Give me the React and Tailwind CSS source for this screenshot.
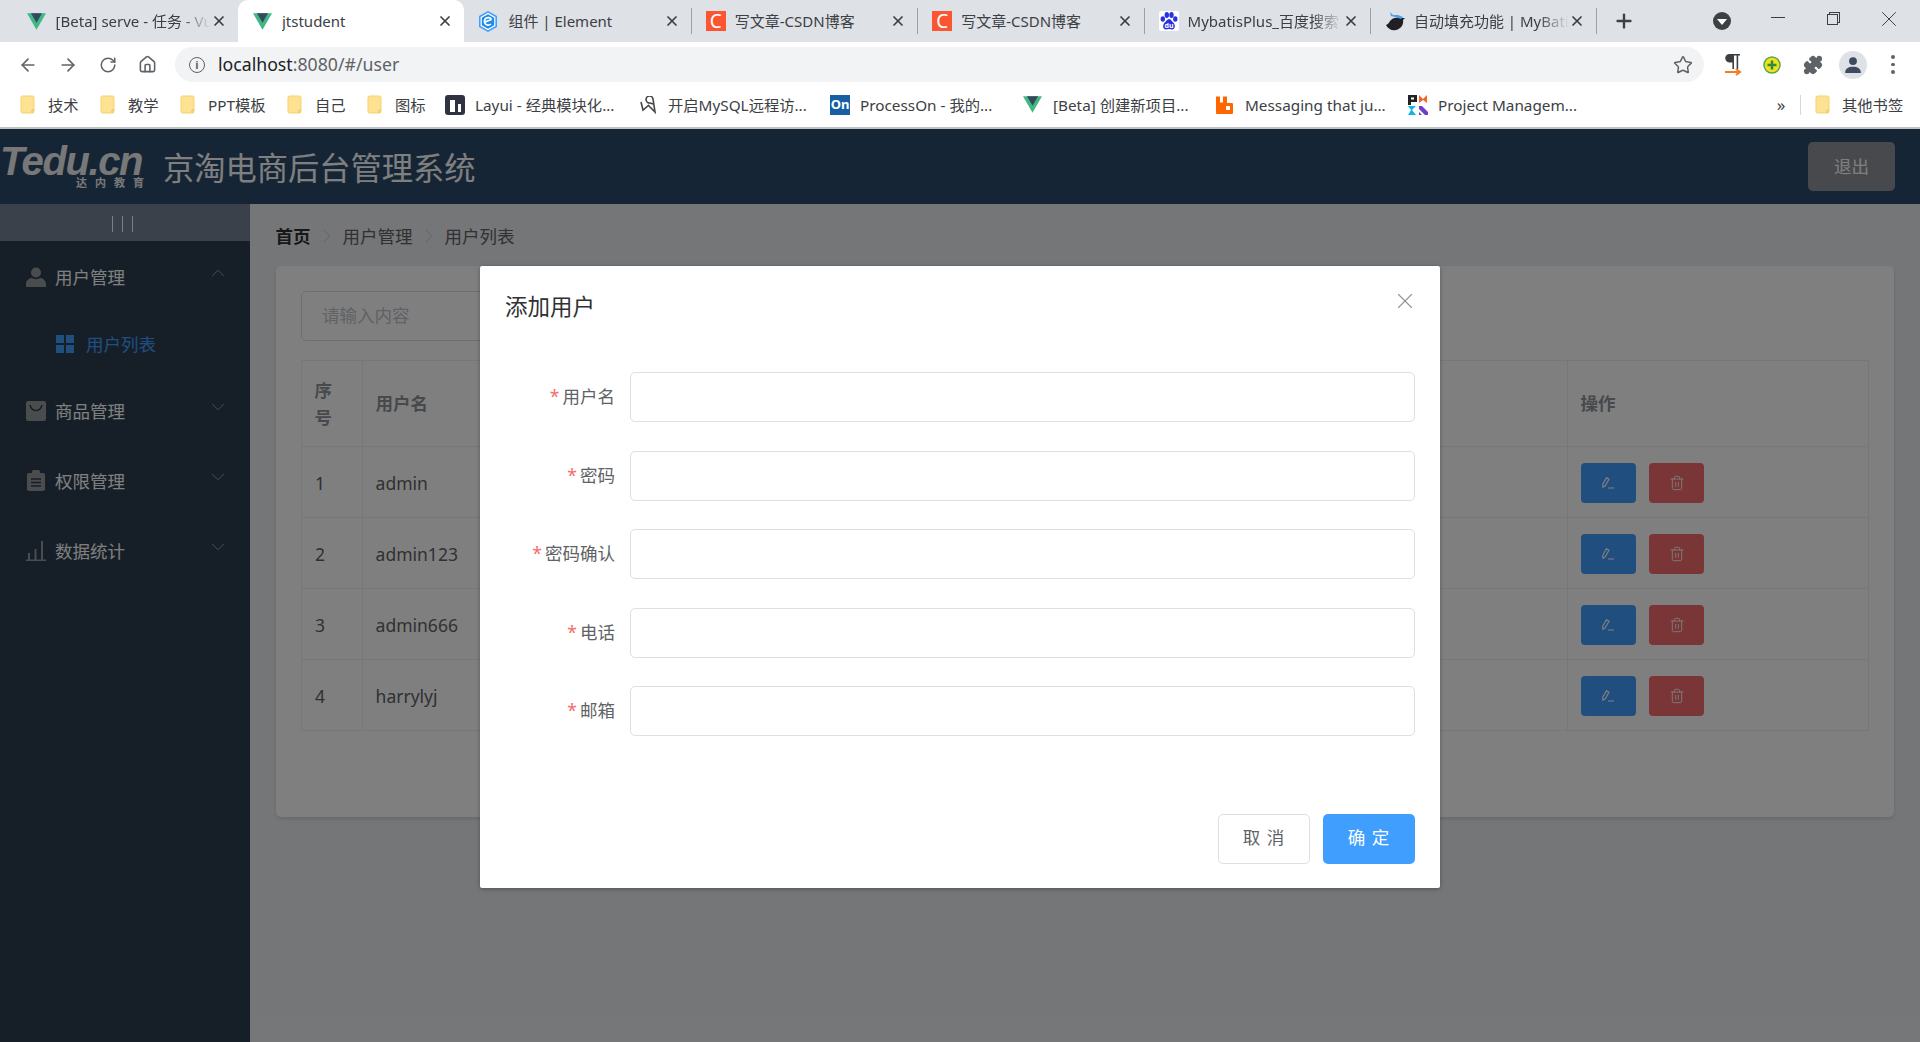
import * as React from "react";
import { ArrowLeft, ArrowRight, RotateCw, Home, Star, Puzzle, X, Plus, ChevronUp, ChevronDown, ChevronRight, Trash2 } from "lucide-react";

const font = "[font-family:'Noto_Sans','Noto_Sans_CJK_SC',sans-serif]";

function VueIcon() {
  return (
    <svg width="19" height="17" viewBox="0 0 24 21" className="shrink-0">
      <path d="M0 0h24L12 21z" fill="#41b883" />
      <path d="M5 0h14L12 12z" fill="#35495e" />
    </svg>
  );
}

function ElementIcon() {
  return (
    <svg width="18" height="21" viewBox="0 0 18 21" className="shrink-0">
      <path d="M9 0l9 5v11l-9 5-9-5V5z" fill="#409eff" />
      <path d="M9 1.800l7.400 4.100v9.200L9 19.200l-7.400-4.100V5.900z" fill="#fff" />
      <path d="M9 3.200l6.200 3.500v7.600L9 17.800l-6.200-3.500V6.700z" fill="#1f8ceb" />
      <path d="M12.500 8.500a3.800 3.800 0 1 0-.6 4.500M6 11l6.500-2.500" fill="none" stroke="#fff" strokeWidth="1.700" />
    </svg>
  );
}

function CsdnIcon() {
  return (
    <div className="flex h-5 w-5 shrink-0 items-center justify-center bg-[#fc5531] text-[19px] leading-none text-white">C</div>
  );
}

function BaiduIcon() {
  return (
    <svg width="20" height="20" viewBox="0 0 20 20" className="shrink-0">
      <rect width="20" height="20" rx="2" fill="#fff" />
      <g fill="#2932e1">
        <ellipse cx="3.800" cy="8" rx="2.200" ry="2.800" />
        <ellipse cx="7.800" cy="4" rx="2.200" ry="3" />
        <ellipse cx="12.500" cy="4" rx="2.200" ry="3" />
        <ellipse cx="16.300" cy="8" rx="2.200" ry="2.800" />
        <path d="M10 8c-2 0-3 2.500-4.500 3.800C3.300 14 3.800 18.500 7 18.500c1.200 0 2-.4 3-.4s2 .4 3 .4c3.200 0 3.700-4.500 1.500-6.700C13 10.500 12 8 10 8z" />
      </g>
      <text x="10" y="16.500" textAnchor="middle" fontSize="7" fontWeight="700" fill="#fff">du</text>
    </svg>
  );
}

function BirdIcon() {
  return (
    <svg width="21" height="21" viewBox="0 0 21 21" className="shrink-0">
      <path d="M1 14c2-1 3-2 4-4 2-3 6-4 9-3l6 0-2 2c1 4-2 9-7 10-4 1-8-1-10-5z" fill="#1f1f24" />
      <path d="M5 1l3 3 5 0 5 2-2 2-6-2-4-1z" fill="#4a9fe8" />
    </svg>
  );
}

function Tab({ icon, title, active, fade, sep }) {
  return (
    <div className={active ? "flex h-[42px] w-[226.400px] shrink-0 items-center rounded-t-[10px] bg-white pl-[15px] pr-[11px]" : "flex h-[42px] w-[226.400px] shrink-0 items-center pl-[15px] pr-[11px]"}>
      <div className="flex w-[19px] shrink-0 items-center">{icon}</div>
      <div className={fade
        ? "ml-[10px] min-w-0 flex-1 overflow-hidden whitespace-nowrap text-[15px] leading-5 text-[#3c4043] [mask-image:linear-gradient(to_right,black_80%,transparent)]"
        : "ml-[10px] min-w-0 flex-1 overflow-hidden whitespace-nowrap text-[15px] leading-5 text-[#3c4043]"}>
        {title}
      </div>
      <X size={16} strokeWidth={2.600} className="shrink-0 text-[#3c4043]" />
      {sep && <div className="ml-[11px] mr-[-12px] h-[26px] w-px shrink-0 bg-[#9aa0a6]" />}
    </div>
  );
}

function Folder() {
  return (
    <svg width="15" height="19" viewBox="0 0 15 19" className="shrink-0">
      <path d="M1 2.500A1.500 1.500 0 0 1 2.500 1h10A1.500 1.500 0 0 1 14 2.500v14a1.500 1.500 0 0 1-1.500 1.500h-10A1.500 1.500 0 0 1 1 16.500z" fill="#fde293" stroke="#f5d36b" />
      <path d="M12 18v-3h2" fill="none" stroke="#eec14e" />
    </svg>
  );
}

function Bookmark({ icon, label, className }) {
  return (
    <div className={`flex shrink-0 items-center ${className}`}>
      {icon}
      <span className="whitespace-nowrap text-[15.300px] leading-5 text-[#3c4043]">{label}</span>
    </div>
  );
}

function BrowserChrome() {
  return (
    <div className="shrink-0">
      <div className="flex h-[42px] items-center bg-[#dee1e6] pl-[11.600px]">
        <Tab icon={<VueIcon />} title="[Beta] serve - 任务 - Vue CLI" fade />
        <Tab active icon={<VueIcon />} title="jtstudent" />
        <Tab icon={<ElementIcon />} title="组件 | Element" sep />
        <Tab icon={<CsdnIcon />} title="写文章-CSDN博客" sep />
        <Tab icon={<CsdnIcon />} title="写文章-CSDN博客" sep />
        <Tab icon={<BaiduIcon />} title="MybatisPlus_百度搜索" fade sep />
        <Tab icon={<BirdIcon />} title="自动填充功能 | MyBatis-Plus" fade sep />
        <Plus size={22} strokeWidth={2.600} className="ml-[16.600px] text-[#3c4043]" />
        <div className="ml-[78px] flex h-[18px] w-[18px] items-center justify-center rounded-full bg-[#3c4043]">
          <div className="mt-[2px] h-0 w-0 border-x-[5px] border-t-[6px] border-x-transparent border-t-white" />
        </div>
        <div className="mb-[8px] ml-[40px] h-px w-[14px] bg-[#3c4043]" />
        <div className="mb-[2px] ml-[42px] mt-[-2px] h-[11px] w-[11px] border border-[#3c4043] shadow-[2px_-2px_0_-1px_#dee1e6,2px_-2px_0_0_#3c4043]" />
        <X size={26} strokeWidth={0.900} className="mb-[5px] ml-[38px] text-[#3c4043]" />
      </div>
      <div className="flex h-[40px] items-center bg-white pl-[18px] pt-[5px]">
        <ArrowLeft size={20} strokeWidth={2} className="text-[#5f6368]" />
        <ArrowRight size={20} strokeWidth={2} className="ml-[20px] text-[#5f6368]" />
        <RotateCw size={18} strokeWidth={2} className="ml-[21px] text-[#5f6368]" />
        <Home size={19} strokeWidth={2} className="ml-[21px] text-[#5f6368]" />
        <div className="ml-[18px] flex h-[35px] w-[1529px] items-center rounded-full bg-[#f1f3f4] pl-[14px] pr-[11px]">
          <div className="flex h-4 w-4 items-center justify-center rounded-full border-[1.500px] border-[#5f6368] text-[11px] font-bold leading-none text-[#5f6368]">i</div>
          <div className="mb-[2px] ml-[13px] flex-1 whitespace-nowrap text-[17.700px] leading-6 text-[#5f6368]"><span className="text-[#202124]">localhost</span>:8080/#/user</div>
          <Star size={20} strokeWidth={1.800} className="text-[#5f6368]" />
        </div>
        <svg width="18" height="24" viewBox="0 0 18 24" className="ml-[20px]">
          <path d="M5 1h11v1.600h-1.800V16h-1.600V2.600H10V16H8.400V9.500H6A4.250 4.250 0 0 1 5 1z" fill="#3c4043" />
          <path d="M1 19h14M12 16l4 3-4 3" fill="none" stroke="#f57c1f" strokeWidth="2" />
        </svg>
        <svg width="20" height="20" viewBox="0 0 20 20" className="ml-[20px]">
          <circle cx="10" cy="10" r="8" fill="#f3e21b" stroke="#55a84f" strokeWidth="1.500" />
          <path d="M10 5.500v9M5.500 10h9" stroke="#2f8c3f" strokeWidth="2.500" />
        </svg>
        <Puzzle size={20} fill="#5f6368" className="ml-[21px] text-[#5f6368]" />
        <div className="ml-[16px] flex h-7 w-7 items-center justify-center rounded-full bg-[#dee1e6]">
          <svg width="18" height="18" viewBox="0 0 16 16"><circle cx="8" cy="4.500" r="3.500" fill="#3e4a5f" /><path d="M1 15c0-4 3-5.500 7-5.500S15 11 15 15z" fill="#3e4a5f" /></svg>
        </div>
        <div className="ml-[24px] flex flex-col gap-[4px]">
          <div className="h-[3.500px] w-[3.500px] rounded-full bg-[#5f6368]" />
          <div className="h-[3.500px] w-[3.500px] rounded-full bg-[#5f6368]" />
          <div className="h-[3.500px] w-[3.500px] rounded-full bg-[#5f6368]" />
        </div>
      </div>
      <div className="flex h-[45px] items-center bg-white pl-[20px]">
        <Bookmark className="w-[80px] gap-[13px]" icon={<Folder />} label="技术" />
        <Bookmark className="w-[80px] gap-[13px]" icon={<Folder />} label="教学" />
        <Bookmark className="w-[107px] gap-[13px]" icon={<Folder />} label="PPT模板" />
        <Bookmark className="w-[80px] gap-[13px]" icon={<Folder />} label="自己" />
        <Bookmark className="w-[78px] gap-[13px]" icon={<Folder />} label="图标" />
        <Bookmark className="w-[195px] gap-[10px]" icon={<div className="flex h-5 w-5 shrink-0 items-end justify-center rounded-[3px] bg-[#2f3242] pb-[3px]"><div className="h-3 w-[5px] bg-white" /><div className="ml-[3px] h-2 w-[3px] bg-white" /></div>} label="Layui - 经典模块化..." />
        <Bookmark className="w-[190px] gap-[10px]" icon={<svg width="18" height="18" viewBox="0 0 18 18" className="shrink-0"><path d="M1 6l2 8 6-5" fill="none" stroke="#444" strokeWidth="1.600" /><path d="M8 9l7 7-2-13a3.500 3.500 0 1 0-3 4l3 1" fill="none" stroke="#444" strokeWidth="1.600" /></svg>} label="开启MySQL远程访..." />
        <Bookmark className="w-[193px] gap-[10px]" icon={<div className="flex h-5 w-5 shrink-0 items-center justify-center bg-[#175fa5] text-[13px] font-bold leading-none text-white">On</div>} label="ProcessOn - 我的..." />
        <Bookmark className="w-[192px] gap-[11px]" icon={<VueIcon />} label="[Beta] 创建新项目..." />
        <Bookmark className="w-[193px] gap-[11px]" icon={<svg width="19" height="20" viewBox="0 0 19 20" className="shrink-0"><path d="M1 1.500h4v6h3v-6h4v6.500h5a1 1 0 0 1 1 1V18a1 1 0 0 1-1 1H2a1 1 0 0 1-1-1z" fill="#f60" /><rect x="11" y="11" width="4" height="4" fill="#fff" /></svg>} label="Messaging that ju..." />
        <Bookmark className="w-[367px] gap-[10px]" icon={<svg width="20" height="20" viewBox="0 0 20 20" className="shrink-0"><path fillRule="evenodd" d="M0 0h9v7H3v3H0zM3 2.500v2h3v-2z" fill="#222" /><path d="M11 0l4 4 4-4v8l-4-3-4 3z" fill="#f26522" /><path d="M0 11h8l-4 4 4 5H0l3-5z" fill="#11b5e4" /><path d="M11 11h3l6 6v3h-3l-6-6zM11 17l3 3h-3z" fill="#6d3fc4" /></svg>} label="Project Managem..." />
        <span className="w-[12px] text-center text-[17px] leading-5 text-[#3c4043]">»</span>
        <div className="ml-[13px] h-[20px] w-px bg-[#d5d7da]" />
        <Bookmark className="ml-[14px] gap-[12px]" icon={<Folder />} label="其他书签" />
      </div>
      <div className="h-[2px] bg-[#bfc1c4]" />
    </div>
  );
}

function Logo() {
  return (
    <div className="flex w-[144px] flex-col items-end">
      <div className="self-start whitespace-nowrap text-[40px] font-bold italic leading-[30px] tracking-[-1.400px] text-[#f0f0f0] [font-family:'Liberation_Sans',sans-serif]">Tedu.cn</div>
      <div className="mr-[-8px] mt-[2px] text-[11px] font-bold leading-[10px] tracking-[8px] text-[#f0f0f0]">达内教育</div>
    </div>
  );
}

function MenuIcon({ name }) {
  if (name === "user") {
    return (
      <svg width="20" height="20" viewBox="0 0 20 20" fill="#94989d">
        <circle cx="10" cy="5.500" r="5" />
        <path d="M0 20v-3c0-4 4-6 6-6 2 1.500 6 1.500 8 0 2 0 6 2 6 6v3z" />
      </svg>
    );
  }
  if (name === "goods") {
    return (
      <svg width="20" height="20" viewBox="0 0 20 20">
        <rect width="20" height="20" rx="2" fill="#94989d" />
        <path d="M4 4c1 4 3.500 5.500 6 5.500S15 8 16 4" fill="none" stroke="#2c3e50" strokeWidth="1.400" />
      </svg>
    );
  }
  if (name === "order") {
    return (
      <svg width="20" height="21" viewBox="0 0 20 21">
        <rect x="1" y="3" width="18" height="18" rx="2" fill="#94989d" />
        <rect x="6" y="0" width="8" height="5" rx="1.500" fill="#94989d" />
        <path d="M5 9h10M5 12.500h10M5 16h10" stroke="#2c3e50" strokeWidth="1.500" />
      </svg>
    );
  }
  return (
    <svg width="20" height="21" viewBox="0 0 20 21">
      <path d="M0 20.500h20M3 20v-7M9.500 20v-11M16 20V1" stroke="#94989d" strokeWidth="2" fill="none" />
    </svg>
  );
}

function MenuItem({ icon, label, open }) {
  const Chevron = open ? ChevronUp : ChevronDown;
  return (
    <div className="flex h-[70px] items-center pl-[26px]">
      <MenuIcon name={icon} />
      <span className="ml-[9px] flex-1 text-[17.500px] leading-6 text-white">{label}</span>
      <Chevron size={22} strokeWidth={1} className="mb-[8px] mr-[21px] text-[#a0a4a8]" />
    </div>
  );
}

function Sidebar() {
  return (
    <div className="flex w-[250px] shrink-0 flex-col bg-[#2c3e50]">
      <div className="flex h-[37px] items-center justify-center gap-[8.700px] bg-[#748296] pr-[5px] pt-[3px]">
        <div className="h-4 w-px bg-white" />
        <div className="h-4 w-px bg-white" />
        <div className="h-4 w-px bg-white" />
      </div>
      <div className="pt-[1px]">
        <MenuItem icon="user" label="用户管理" open />
        <div className="flex h-[63.500px] items-center pl-[56px]">
          <div className="grid grid-cols-2 gap-[2px]">
            <div className="h-2 w-2 bg-[#409eff]" />
            <div className="h-2 w-2 bg-[#409eff]" />
            <div className="h-2 w-2 bg-[#409eff]" />
            <div className="h-2 w-2 bg-[#409eff]" />
          </div>
          <span className="ml-[12px] text-[17.500px] leading-6 text-[#409eff]">用户列表</span>
        </div>
        <MenuItem icon="goods" label="商品管理" />
        <MenuItem icon="order" label="权限管理" />
        <MenuItem icon="data" label="数据统计" />
      </div>
    </div>
  );
}

const users = [
  { id: 1, name: "admin" },
  { id: 2, name: "admin123" },
  { id: 3, name: "admin666" },
  { id: 4, name: "harrylyj" },
];

function UserTable() {
  return (
    <div className="mt-[19px] border-l border-r border-t border-[#ebeef5] text-[17.500px] leading-[29px] text-[#606266]">
      <div className="grid h-[86px] grid-cols-[61px_1205px_1fr] border-b border-[#ebeef5] font-bold text-[#909399]">
        <div className="flex items-center border-r border-[#ebeef5] pl-[12.500px]"><span className="w-[20px] leading-[27px]">序号</span></div>
        <div className="flex items-center border-r border-[#ebeef5] pl-[12.500px]">用户名</div>
        <div className="flex items-center pl-[12.500px]">操作</div>
      </div>
      {users.map((u) => (
        <div key={u.id} className="grid h-[71px] grid-cols-[61px_1205px_1fr] border-b border-[#ebeef5]">
          <div className="flex items-center border-r border-[#ebeef5] pl-[13px] pt-[2px]">{u.id}</div>
          <div className="flex items-center border-r border-[#ebeef5] pl-[12.500px] pt-[2px]">{u.name}</div>
          <div className="flex items-center gap-[13px] pl-[13px] pt-[2px]">
            <div className="flex h-10 w-[55px] items-center justify-center rounded-[4px] bg-[#409eff]">
              <svg width="13" height="12" viewBox="0 0 13 12" fill="none" stroke="#fff" strokeWidth="1.200">
                <path d="M4.500.7L7 2.200 3.200 8.800 1 10.300.7 7.300zM6 11h6" />
              </svg>
            </div>
            <div className="flex h-10 w-[55px] items-center justify-center rounded-[4px] bg-[#f56c6c]">
              <Trash2 size={16} strokeWidth={1.300} className="text-white" />
            </div>
          </div>
        </div>
      ))}
    </div>
  );
}

const fields = ["用户名", "密码", "密码确认", "电话", "邮箱"];

function Dialog() {
  return (
    <div className="mx-auto mt-[137px] h-[622px] w-[960px] rounded-[2px] bg-white shadow-[0_1px_4px_rgba(0,0,0,0.3)]">
      <div className="flex h-[106px] items-start justify-between pl-[25px] pr-[22px] pt-[25px]">
        <span className="text-[22.500px] leading-[32px] text-[#303133]">添加用户</span>
        <X size={26} strokeWidth={1} className="mt-[-3px] text-[#909399]" />
      </div>
      <div className="flex flex-col gap-[28.500px] px-[25px]">
        {fields.map((f) => (
          <div key={f} className="flex h-[50px] items-center">
            <label className="w-[125px] pb-[2px] pr-[15px] text-right text-[17.500px] leading-6 text-[#606266]">
              <span className="mr-[3px] text-[#f56c6c]">*</span>{f}
            </label>
            <div className="h-[50px] flex-1 rounded-[5px] border border-[#dcdfe6] bg-white" />
          </div>
        ))}
      </div>
      <div className="mt-[78px] flex justify-end gap-[13px] pr-[25px] text-[17.500px] leading-6">
        <button className="h-[50px] w-[92px] rounded-[5px] border border-[#dcdfe6] bg-white pb-[5px] tracking-[1px] text-[#606266]">取 消</button>
        <button className="h-[50px] w-[92px] rounded-[5px] bg-[#409eff] pb-[5px] tracking-[1px] text-white">确 定</button>
      </div>
    </div>
  );
}

export default function App() {
  return (
    <div className={`flex h-[1042px] w-[1920px] flex-col overflow-hidden bg-white ${font}`}>
      <BrowserChrome />
      <div className="relative flex min-h-0 flex-1 flex-col">
        <div className="flex h-[75px] shrink-0 items-center justify-between bg-[#2b4b6b] pr-[25px]">
          <div className="flex items-center">
            <Logo />
            <span className="ml-[19px] mt-[2px] text-[31.250px] leading-[44px] text-white">京淘电商后台管理系统</span>
          </div>
          <button className="h-[49px] w-[87px] rounded-[5px] bg-[#909399] pb-[2px] text-[17.500px] leading-6 text-white">退出</button>
        </div>
        <div className="flex min-h-0 flex-1">
          <Sidebar />
          <div className="flex-1 bg-[#eaedf1] px-[25.600px] pt-[20px]">
            <div className="flex h-[24px] items-center text-[17.500px] leading-6 text-[#606266]">
              <span className="font-bold text-[#303133]">首页</span>
              <ChevronRight size={22} strokeWidth={1} className="mx-[5px] text-[#c0c4cc]" />
              <span>用户管理</span>
              <ChevronRight size={22} strokeWidth={1} className="mx-[5px] text-[#c0c4cc]" />
              <span>用户列表</span>
            </div>
            <div className="mt-[18px] h-[551px] rounded-[5px] bg-white px-[25.500px] pt-[25px] shadow-[0_2px_4px_rgba(0,0,0,0.12)]">
              <div className="flex h-[50px] w-[500px] items-center rounded-[5px] border border-[#dcdfe6] pb-[2px] pl-[20px] text-[17.500px] leading-6 text-[#c0c4cc]">请输入内容</div>
              <UserTable />
            </div>
          </div>
        </div>
        <div className="absolute inset-0 bg-black/50">
          <Dialog />
        </div>
      </div>
    </div>
  );
}
